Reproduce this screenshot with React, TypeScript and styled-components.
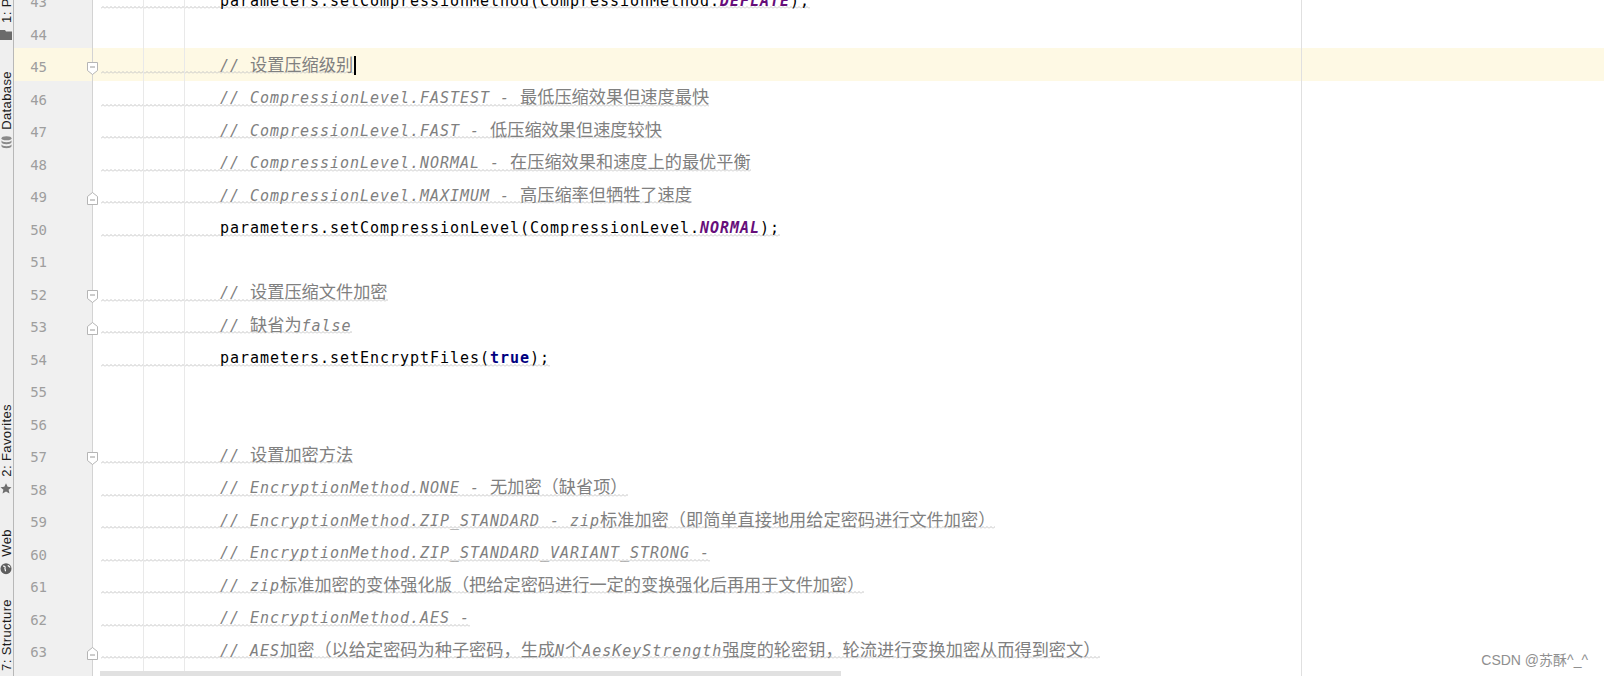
import React from "react";
import styled, { createGlobalStyle } from "styled-components";

const GlobalStyle = createGlobalStyle`
  html, body {
    margin: 0;
    padding: 0;
    background: #ffffff;
    overflow: hidden;
  }
`;

const MONO = `"DejaVu Sans Mono", "Liberation Mono", monospace`;
const CJK = `"Noto Sans CJK SC", "Noto Sans", sans-serif`;

const wave = `url("data:image/svg+xml,%3Csvg xmlns='http://www.w3.org/2000/svg' width='4' height='3'%3E%3Cpath d='M0 2.5L2 0.5L4 2.5' fill='none' stroke='%23c6c6c6' stroke-width='1'/%3E%3C/svg%3E")`;

const Screen = styled.div`
  display: flex;
  height: 676px;
  width: 1604px;
  overflow: hidden;
`;

const ToolStrip = styled.aside`
  width: 13px;
  flex-shrink: 0;
  background: #efefef;
  border-right: 1px solid #b8b8b8;
  display: flex;
  flex-direction: column;
  align-items: center;
  overflow: hidden;
`;

const ToolTab = styled.div<{ $top: number }>`
  flex-shrink: 0;
  margin-top: ${(p) => p.$top}px;
  writing-mode: vertical-rl;
  transform: rotate(180deg);
  display: flex;
  align-items: center;
  gap: 6px;
  padding: 2px 0;
  font-family: "Liberation Sans", Arial, sans-serif;
  font-size: 13px;
  letter-spacing: 0.4px;
  color: #1c1c1c;
  white-space: nowrap;
  line-height: 13px;

  svg {
    transform: rotate(180deg);
    flex-shrink: 0;
  }
`;

const Main = styled.main`
  position: relative;
  flex: 1;
  overflow: hidden;
`;

const Lines = styled.div`
  display: grid;
  grid-template-columns: 79px 1fr;
  grid-auto-rows: 32.5px;
  margin-top: -17px;
`;

const Gutter = styled.div<{ $current: boolean }>`
  position: relative;
  box-sizing: border-box;
  border-right: 1px solid #d3d3d3;
  background: ${(p) => (p.$current ? "#fdf8e3" : "#f0f0f0")};
`;

const LineNo = styled.span`
  display: block;
  width: 33px;
  text-align: right;
  padding-top: 3px;
  font-family: ${MONO};
  font-size: 14px;
  line-height: 32.5px;
  color: #9e9e9e;
`;

const FoldMark = styled.svg`
  position: absolute;
  right: -6px;
  top: 14px;
`;

const CodeCell = styled.div<{ $current: boolean }>`
  display: flex;
  padding-left: 8px;
  background: ${(p) => (p.$current ? "#fef9e4" : "transparent")};
  min-width: 0;
`;

const Content = styled.div<{ $wavy: boolean }>`
  box-sizing: border-box;
  height: 32.5px;
  padding-left: 119px;
  padding-top: 1.5px;
  white-space: pre;
  font-family: ${MONO};
  font-size: 15px;
  letter-spacing: 0.97px;
  line-height: 32.5px;
  color: #000000;
  background-image: ${(p) => (p.$wavy ? wave : "none")};
  background-repeat: repeat-x;
  background-position: 0 23px;
  background-size: 4px 3px;
`;

const Comment = styled.span`
  color: #808080;
  font-style: italic;
`;

const Han = styled.span`
  font-family: ${CJK};
  font-style: normal;
  font-size: 17.2px;
  letter-spacing: 0;
  line-height: 1;
`;

const Constant = styled.span`
  color: #660e7a;
  font-weight: bold;
  font-style: italic;
`;

const Keyword = styled.span`
  color: #000080;
  font-weight: bold;
`;

const Caret = styled.span`
  display: inline-block;
  width: 2px;
  height: 19px;
  margin-left: 1px;
  background: #000000;
  vertical-align: -4px;
`;

const Guide = styled.div<{ $x: number; $color: string }>`
  position: absolute;
  top: 0;
  bottom: 0;
  left: ${(p) => p.$x}px;
  width: 1px;
  background: ${(p) => p.$color};
  pointer-events: none;
`;

const HScroll = styled.div`
  position: absolute;
  left: 86px;
  bottom: 0;
  width: 741px;
  height: 5px;
  background: #e1e1e1;
`;

const Watermark = styled.div`
  position: absolute;
  right: 16px;
  bottom: 8px;
  font-family: "Liberation Sans", ${CJK};
  font-size: 14px;
  line-height: 16px;
  color: #8f8f8f;
`;

type Seg = { t: string; k?: "const" | "kw" };
type Line =
  | { n: number; kind: "empty" }
  | { n: number; kind: "comment"; text: string; caret?: boolean }
  | { n: number; kind: "code"; segs: Seg[] };

const lines: Line[] = [
  {
    n: 43,
    kind: "code",
    segs: [
      { t: "parameters.setCompressionMethod(CompressionMethod." },
      { t: "DEFLATE", k: "const" },
      { t: ");" },
    ],
  },
  { n: 44, kind: "empty" },
  { n: 45, kind: "comment", text: "// 设置压缩级别", caret: true },
  { n: 46, kind: "comment", text: "// CompressionLevel.FASTEST - 最低压缩效果但速度最快" },
  { n: 47, kind: "comment", text: "// CompressionLevel.FAST - 低压缩效果但速度较快" },
  { n: 48, kind: "comment", text: "// CompressionLevel.NORMAL - 在压缩效果和速度上的最优平衡" },
  { n: 49, kind: "comment", text: "// CompressionLevel.MAXIMUM - 高压缩率但牺牲了速度" },
  {
    n: 50,
    kind: "code",
    segs: [
      { t: "parameters.setCompressionLevel(CompressionLevel." },
      { t: "NORMAL", k: "const" },
      { t: ");" },
    ],
  },
  { n: 51, kind: "empty" },
  { n: 52, kind: "comment", text: "// 设置压缩文件加密" },
  { n: 53, kind: "comment", text: "// 缺省为false" },
  {
    n: 54,
    kind: "code",
    segs: [{ t: "parameters.setEncryptFiles(" }, { t: "true", k: "kw" }, { t: ");" }],
  },
  { n: 55, kind: "empty" },
  { n: 56, kind: "empty" },
  { n: 57, kind: "comment", text: "// 设置加密方法" },
  { n: 58, kind: "comment", text: "// EncryptionMethod.NONE - 无加密（缺省项）" },
  {
    n: 59,
    kind: "comment",
    text: "// EncryptionMethod.ZIP_STANDARD - zip标准加密（即简单直接地用给定密码进行文件加密）",
  },
  { n: 60, kind: "comment", text: "// EncryptionMethod.ZIP_STANDARD_VARIANT_STRONG -" },
  {
    n: 61,
    kind: "comment",
    text: "// zip标准加密的变体强化版（把给定密码进行一定的变换强化后再用于文件加密）",
  },
  { n: 62, kind: "comment", text: "// EncryptionMethod.AES -" },
  {
    n: 63,
    kind: "comment",
    text: "// AES加密（以给定密码为种子密码，生成N个AesKeyStrength强度的轮密钥，轮流进行变换加密从而得到密文）",
  },
  { n: 64, kind: "empty" },
];

const foldStart = new Set([45, 52, 57]);
const foldEnd = new Set([49, 53, 63]);

const CURRENT = 45;

const splitHan = (text: string) =>
  text.split(/([\u3000-\u303f\u4e00-\u9fff\uff00-\uffef]+)/).filter(Boolean);

const isHan = (s: string) => /[\u3000-\u303f\u4e00-\u9fff\uff00-\uffef]/.test(s);

const Fold: React.FC<{ end?: boolean }> = ({ end }) => (
  <FoldMark width="11" height="13" viewBox="0 0 11 13">
    <path
      d={end ? "M0.5 12.5H10.5V4.5L5.5 0.5L0.5 4.5Z" : "M0.5 0.5H10.5V8.5L5.5 12.5L0.5 8.5Z"}
      fill="#ffffff"
      stroke="#b5b5b5"
    />
    <path d={end ? "M3 8H8" : "M3 5H8"} stroke="#9a9a9a" />
  </FoldMark>
);

const renderLine = (line: Line) => {
  if (line.kind === "empty") return null;
  if (line.kind === "code") {
    return line.segs.map((s, i) =>
      s.k === "const" ? (
        <Constant key={i}>{s.t}</Constant>
      ) : s.k === "kw" ? (
        <Keyword key={i}>{s.t}</Keyword>
      ) : (
        <React.Fragment key={i}>{s.t}</React.Fragment>
      )
    );
  }
  return (
    <Comment>
      {splitHan(line.text).map((part, i) =>
        isHan(part) ? <Han key={i}>{part}</Han> : <React.Fragment key={i}>{part}</React.Fragment>
      )}
      {line.caret && <Caret />}
    </Comment>
  );
};

const FolderIcon = () => (
  <svg width="12" height="11" viewBox="0 0 12 11">
    <path d="M0 1h5l1 1.5h6V11H0z" fill="#6b6b6b" />
  </svg>
);

const DbIcon = () => (
  <svg width="11" height="13" viewBox="0 0 11 13">
    <ellipse cx="5.5" cy="2.5" rx="5" ry="2" fill="#8a8a8a" />
    <path d="M0.5 4.5c0 2.6 10 2.6 10 0v2c0 2.6-10 2.6-10 0z" fill="#8a8a8a" />
    <path d="M0.5 8.5c0 2.6 10 2.6 10 0v2c0 2.6-10 2.6-10 0z" fill="#8a8a8a" />
  </svg>
);

const StarIcon = () => (
  <svg width="12" height="12" viewBox="0 0 12 12">
    <path d="M6 0.5l1.7 3.6 3.8.4-2.9 2.6.9 3.8L6 8.9 2.5 10.9l.9-3.8L.5 4.5l3.8-.4z" fill="#6f6f6f" />
  </svg>
);

const GlobeIcon = () => (
  <svg width="12" height="12" viewBox="0 0 12 12">
    <circle cx="6" cy="6" r="5.5" fill="#5e5e5e" />
    <path d="M3 3.5c1.5-.5 2.5.5 2 1.8-.5 1.2 1 2 .3 3.2M8 2.5c.3 1 1.5 1.2 2 2.2" stroke="#ffffff" strokeWidth="1.2" fill="none" />
  </svg>
);

const StructureIcon = () => (
  <svg width="12" height="12" viewBox="0 0 12 12">
    <rect x="0.5" y="0.5" width="4" height="4" fill="#6b6b6b" />
    <rect x="6.5" y="6.5" width="4" height="4" fill="#6b6b6b" />
    <path d="M2.5 4.5v4h4" stroke="#6b6b6b" fill="none" />
  </svg>
);

const App: React.FC = () => (
  <>
    <GlobalStyle />
    <Screen>
      <ToolStrip>
        <ToolTab $top={-38}>
          <FolderIcon />
          <span>1: Project</span>
        </ToolTab>
        <ToolTab $top={27}>
          <DbIcon />
          <span>Database</span>
        </ToolTab>
        <ToolTab $top={251}>
          <StarIcon />
          <span>2: Favorites</span>
        </ToolTab>
        <ToolTab $top={30}>
          <GlobeIcon />
          <span>Web</span>
        </ToolTab>
        <ToolTab $top={21}>
          <StructureIcon />
          <span>7: Structure</span>
        </ToolTab>
      </ToolStrip>

      <Main>
        <Lines>
          {lines.map((line) => {
            const current = line.n === CURRENT;
            return (
              <React.Fragment key={line.n}>
                <Gutter $current={current}>
                  <LineNo>{line.n}</LineNo>
                  {foldStart.has(line.n) && <Fold />}
                  {foldEnd.has(line.n) && <Fold end />}
                </Gutter>
                <CodeCell $current={current}>
                  <Content $wavy={line.kind !== "empty"}>{renderLine(line)}</Content>
                </CodeCell>
              </React.Fragment>
            );
          })}
        </Lines>

        <Guide $x={129} $color="#e9e9e9" />
        <Guide $x={170} $color="#e9e9e9" />
        <Guide $x={1287} $color="#e0e0e0" />
        <HScroll />
        <Watermark>CSDN @苏酥^_^</Watermark>
      </Main>
    </Screen>
  </>
);

export default App;
